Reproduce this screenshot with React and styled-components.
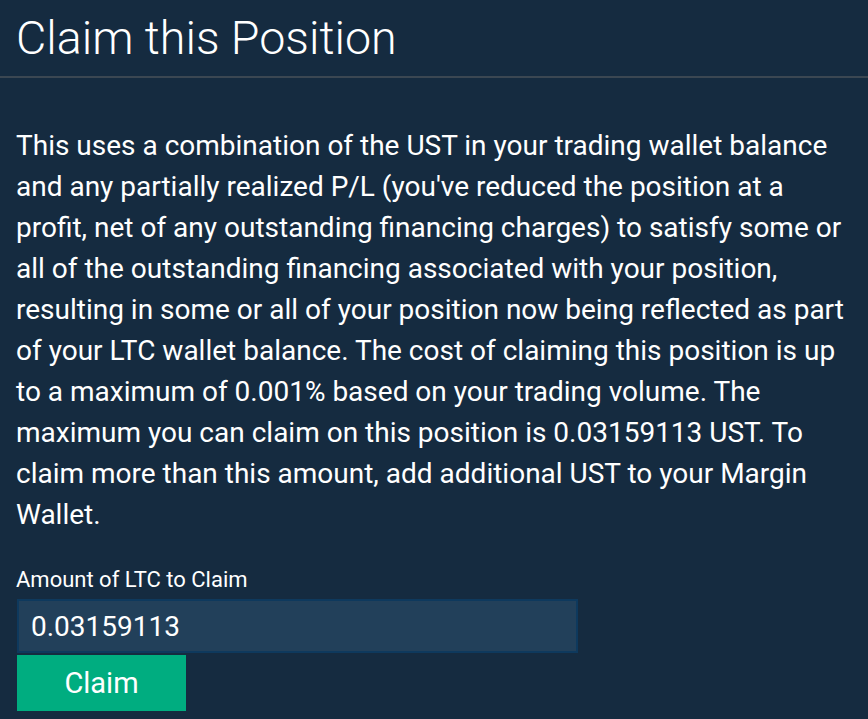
import React, { useState } from 'react';
import styled, { createGlobalStyle } from 'styled-components';

const GlobalStyle = createGlobalStyle`
  html, body {
    margin: 0;
    padding: 0;
    background: #152b40;
  }
  body {
    font-family: Roboto, "Noto Sans", Arial, sans-serif;
    color: #ffffff;
  }
`;

const Panel = styled.div`
  width: 868px;
  height: 719px;
  box-sizing: border-box;
  background: #152b40;
  overflow: hidden;
`;

const Header = styled.div`
  padding: 10px 0 0 16px;
  border-bottom: 2px solid #3b4752;
  height: 78px;
  box-sizing: border-box;
`;

const Title = styled.h2`
  margin: 0;
  font-weight: 300;
  font-size: 46.6px;
  line-height: 56px;
  color: #ffffff;
`;

const Body = styled.div`
  padding: 47px 16px 0 16px;
`;

const Description = styled.p`
  margin: 0;
  font-size: 28px;
  line-height: 41px;
  color: #ffffff;
`;

const Form = styled.form`
  margin-top: 32px;
  display: flex;
  flex-direction: column;
  align-items: flex-start;
`;

const Label = styled.label`
  font-size: 22px;
  line-height: 26px;
  margin-bottom: 6px;
  color: #ffffff;
`;

const AmountInput = styled.input`
  width: 561px;
  height: 54px;
  box-sizing: border-box;
  margin-left: 1px;
  padding: 0 12px;
  background: #22405a;
  border: 2px solid #0e395d;
  color: #ffffff;
  font-family: inherit;
  font-size: 28px;
  outline: none;
`;

const ClaimButton = styled.button`
  margin-top: 2px;
  margin-left: 1px;
  width: 169px;
  height: 56px;
  border: 0;
  background: #00ad80;
  color: #ffffff;
  font-family: inherit;
  font-size: 29px;
  cursor: pointer;
`;

const App = () => {
  const [amount, setAmount] = useState('0.03159113');

  return (
    <Panel>
      <GlobalStyle />
      <Header>
        <Title>Claim this Position</Title>
      </Header>
      <Body>
        <Description>
          This uses a combination of the UST in your trading wallet balance and
          any partially realized P/L (you've reduced the position at a profit,
          net of any outstanding financing charges) to satisfy some or all of
          the outstanding financing associated with your position, resulting in
          some or all of your position now being reflected as part of your LTC
          wallet balance. The cost of claiming this position is up to a maximum
          of 0.001% based on your trading volume. The maximum you can claim on
          this position is 0.03159113 UST. To claim more than this amount, add
          additional UST to your Margin Wallet.
        </Description>
        <Form onSubmit={(e) => e.preventDefault()}>
          <Label htmlFor="amount">Amount of LTC to Claim</Label>
          <AmountInput
            id="amount"
            value={amount}
            onChange={(e) => setAmount(e.target.value)}
          />
          <ClaimButton type="submit">Claim</ClaimButton>
        </Form>
      </Body>
    </Panel>
  );
};

export default App;
